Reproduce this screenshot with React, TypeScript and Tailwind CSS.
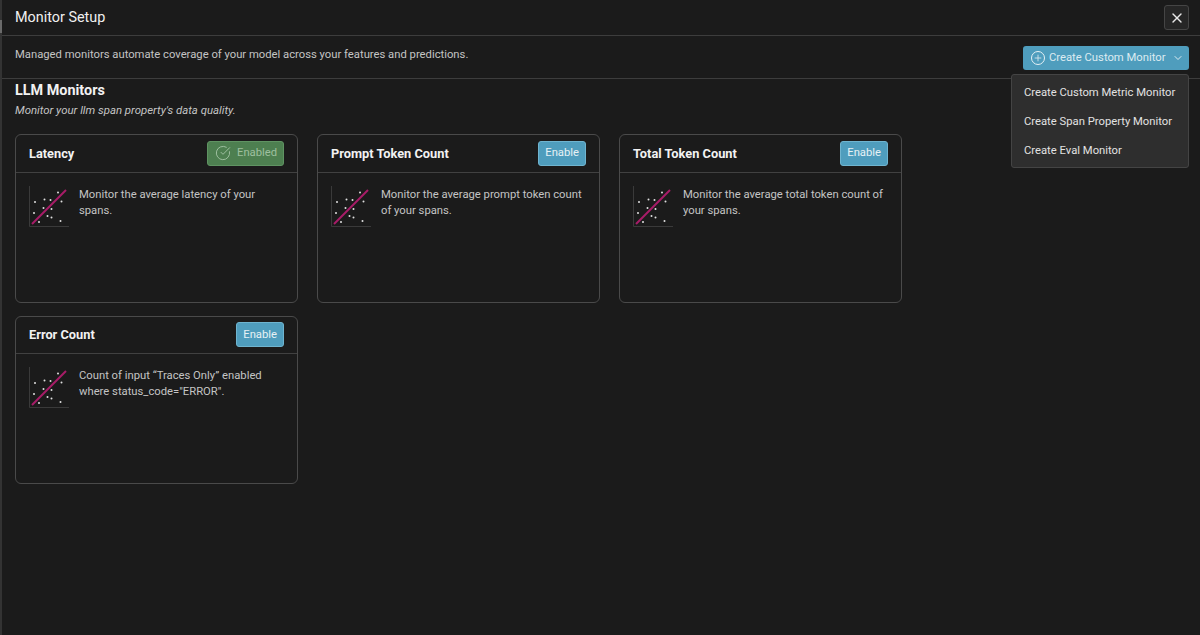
import { ChevronDown, CircleCheckBig, Plus, X } from 'lucide-react';

const dots = [
  [6, 16], [15.5, 13.5], [21.5, 14], [29, 6.5], [32.5, 15.5], [5, 27], [14.5, 22],
  [22.5, 23], [10, 36], [18.5, 30], [22.5, 31.5], [31.5, 35],
];

const ChartIcon = () => (
  <svg width="40" height="41" viewBox="0 0 40 41" className="shrink-0">
    <path d="M0.5 0 V40.5 H40" fill="none" stroke="#3a3a3a" strokeWidth="1" />
    <line x1="3" y1="38" x2="37" y2="4" stroke="#a81c68" strokeWidth="2" />
    {dots.map(([x, y]) => (
      <circle key={`${x}-${y}`} cx={x} cy={y} r="1" fill="#e0e0e0" />
    ))}
  </svg>
);

const EnableButton = () => (
  <button className="h-[25px] pt-[1px] px-[6px] rounded-[3px] bg-[#4f9dbd] border border-[#6fb4cf] text-[11.25px] text-[#e6f1f5]">
    Enable
  </button>
);

const EnabledButton = () => (
  <button className="h-[25px] w-[77px] flex items-center gap-[6px] pl-[7px] rounded-[3px] bg-[#4d7f50] border border-[#5f9362] text-[11.25px] text-[#9ebf9f]">
    <CircleCheckBig size={16} strokeWidth={1.5} />
    <span className="pt-[1px]">Enabled</span>
  </button>
);

const MonitorCard = ({ title, text, enabled }: { title: string; text: string; enabled?: boolean }) => (
  <div className="h-[168.6px] rounded-[6px] border border-[#4a4a4a]">
    <div className="h-[37.6px] flex items-center justify-between px-[13px] border-b border-[#414141]">
      <span className="text-[12.8px] font-bold text-[#f2f2f2]">{title}</span>
      {enabled ? <EnabledButton /> : <EnableButton />}
    </div>
    <div className="flex gap-[10px] pt-[13px] pl-[13px] pr-[12px]">
      <ChartIcon />
      <p className="mt-[1px] text-[11.25px] leading-[16px] text-[#c4c4c4]">{text}</p>
    </div>
  </div>
);

export default function App() {
  return (
    <div className="relative h-[635px] w-[1200px] bg-[#1b1b1b] border-l-2 border-[#333333] font-['Roboto',sans-serif]">
      {/* Title bar */}
      <div className="h-[36px] flex items-center justify-between pl-[13px] pr-[11px] border-b border-[#3d3d3d]">
        <h1 className="text-[14.4px] text-[#f0f0f0]">Monitor Setup</h1>
        <button className="w-[25px] h-[25px] flex items-center justify-center rounded-[3px] bg-[#262626] border border-[#454545] text-[#e8e8e8]">
          <X size={16} />
        </button>
      </div>

      {/* Description row */}
      <div className="h-[43px] flex items-start justify-between pt-[10px] pl-[13px] pr-[11px] border-b border-[#3d3d3d]">
        <p className="mt-[1px] text-[11.25px] leading-[16px] text-[#c4c4c4]">
          Managed monitors automate coverage of your model across your features and predictions.
        </p>
        <button className="w-[166px] h-[24px] flex items-center pl-[8px] rounded-[3px] bg-[#4f9dbd] text-[11.25px] text-[#dcebf1]">
          <span className="w-[14px] h-[14px] mr-[4px] rounded-full border border-[#e6f1f5] flex items-center justify-center">
            <Plus size={10} strokeWidth={2} />
          </span>
          <span className="pt-[1px]">Create Custom Monitor</span>
          <ChevronDown size={12} className="ml-auto mr-[5px]" />
        </button>
      </div>

      {/* Monitor list */}
      <div className="pl-[13px] pt-[3px]">
        <h2 className="text-[14.4px] leading-[18px] font-bold text-[#f2f2f2]">LLM Monitors</h2>
        <p className="mt-[2px] text-[11.4px] leading-[16px] italic text-[#c4c4c4]">
          Monitor your llm span property's data quality.
        </p>
        <div className="mt-[16px] grid grid-cols-[283px_283px_283px] gap-x-[19px] gap-y-[13px]">
          <MonitorCard title="Latency" text="Monitor the average latency of your spans." enabled />
          <MonitorCard title="Prompt Token Count" text="Monitor the average prompt token count of your spans." />
          <MonitorCard title="Total Token Count" text="Monitor the average total token count of your spans." />
          <MonitorCard title="Error Count" text={'Count of input “Traces Only” enabled where status_code="ERROR".'} />
        </div>
      </div>

      {/* Dropdown menu */}
      <div className="absolute left-[1009px] top-[74px] w-[178px] h-[94px] pt-[4px] rounded-[3px] bg-[#2e2e2e] border border-[#444444] text-[11.25px] text-[#e2e2e2]">
        <div className="h-[29px] flex items-center pl-[12px]">Create Custom Metric Monitor</div>
        <div className="h-[29px] flex items-center pl-[12px]">Create Span Property Monitor</div>
        <div className="h-[29px] flex items-center pl-[12px]">Create Eval Monitor</div>
      </div>

      {/* Edge of the window behind the panel */}
      <div className="absolute -left-[2px] top-[20px] w-[2px] h-[13px] bg-[#6a6a6a]" />
    </div>
  );
}
